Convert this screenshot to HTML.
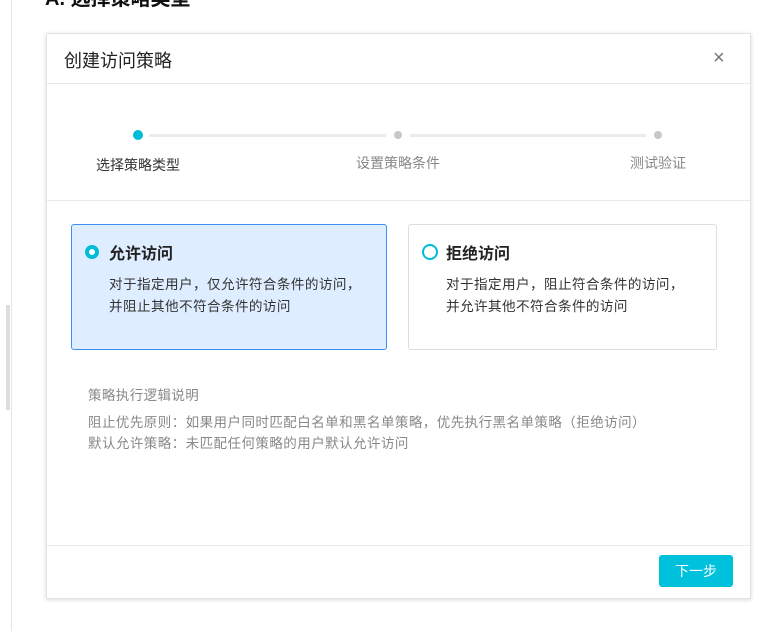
<!DOCTYPE html><html><head><meta charset="utf-8"><style>
body{margin:0;width:770px;height:631px;background:#fff;position:relative;overflow:hidden;font-family:"Liberation Sans","Noto Sans CJK SC",sans-serif;}
.a{position:absolute}
</style></head><body>
<div class="a" style="left:45px;top:-18px;font-size:20px;font-weight:bold;color:#111">A. 选择策略类型</div>
<div class="a" style="left:11px;top:0;width:1px;height:631px;background:#e6e6e6"></div>
<div class="a" style="left:6px;top:305px;width:4px;height:105px;background:#ddd"></div>
<div class="a" style="left:46px;top:33px;width:703px;height:564px;background:#fff;border:1px solid #e3e3e3;box-shadow:0 1px 4px rgba(0,0,0,.15)">
 <div class="a" style="left:17px;top:13px;font-size:18px;color:#222">创建访问策略</div>
 <div class="a" style="left:666px;top:13px;font-size:20px;color:#777">×</div>
 <div class="a" style="left:0;top:49px;width:703px;height:1px;background:#eaeaea"></div>
 <div class="a" style="left:86px;top:96px;width:10px;height:10px;border-radius:50%;background:#00bcd8"></div>
 <div class="a" style="left:102px;top:100px;width:237px;height:3px;background:#ebebeb"></div>
 <div class="a" style="left:347px;top:97px;width:8px;height:8px;border-radius:50%;background:#c8c8c8"></div>
 <div class="a" style="left:363px;top:100px;width:236px;height:3px;background:#ebebeb"></div>
 <div class="a" style="left:607px;top:97px;width:8px;height:8px;border-radius:50%;background:#c8c8c8"></div>
 <div class="a" style="left:49px;top:121px;font-size:14px;color:#333">选择策略类型</div>
 <div class="a" style="left:309px;top:119px;font-size:14px;color:#888">设置策略条件</div>
 <div class="a" style="left:583px;top:119px;font-size:14px;color:#888">测试验证</div>
 <div class="a" style="left:0;top:166px;width:703px;height:1px;background:#eaeaea"></div>
 <div class="a" style="left:24px;top:190px;width:314px;height:124px;background:#deedff;border:1px solid #3d8ef0;border-radius:3px">
  <div class="a" style="left:13px;top:20px;width:6px;height:6px;border:4px solid #00bcd8;border-radius:50%;background:#fff"></div>
  <div class="a" style="left:37px;top:15px;font-size:16px;font-weight:bold;color:#222">允许访问</div>
  <div class="a" style="left:37px;top:49px;font-size:13.6px;letter-spacing:0.4px;color:#333;line-height:22px;white-space:nowrap">对于指定用户，仅允许符合条件的访问，<br>并阻止其他不符合条件的访问</div>
 </div>
 <div class="a" style="left:361px;top:190px;width:307px;height:124px;background:#fff;border:1px solid #ddd;border-radius:3px">
  <div class="a" style="left:13px;top:19px;width:12px;height:12px;border:2px solid #00bcd8;border-radius:50%"></div>
  <div class="a" style="left:37px;top:15px;font-size:16px;font-weight:bold;color:#222">拒绝访问</div>
  <div class="a" style="left:37px;top:49px;font-size:13.6px;letter-spacing:0.4px;color:#333;line-height:22px;white-space:nowrap">对于指定用户，阻止符合条件的访问，<br>并允许其他不符合条件的访问</div>
 </div>
 <div class="a" style="left:41px;top:350px;font-size:13.5px;letter-spacing:0.4px;color:#888">策略执行逻辑说明</div>
 <div class="a" style="left:41px;top:378px;font-size:13.5px;letter-spacing:0.45px;color:#888;line-height:21px;white-space:nowrap">阻止优先原则：如果用户同时匹配白名单和黑名单策略，优先执行黑名单策略（拒绝访问）<br>默认允许策略：未匹配任何策略的用户默认允许访问</div>
 <div class="a" style="left:0;top:511px;width:703px;height:1px;background:#eaeaea"></div>
 <div class="a" style="left:612px;top:521px;width:74px;height:32px;background:#00c1dc;border-radius:3px;color:#fff;font-size:14px;text-align:center;line-height:32px">下一步</div>
</div>
</body></html>
